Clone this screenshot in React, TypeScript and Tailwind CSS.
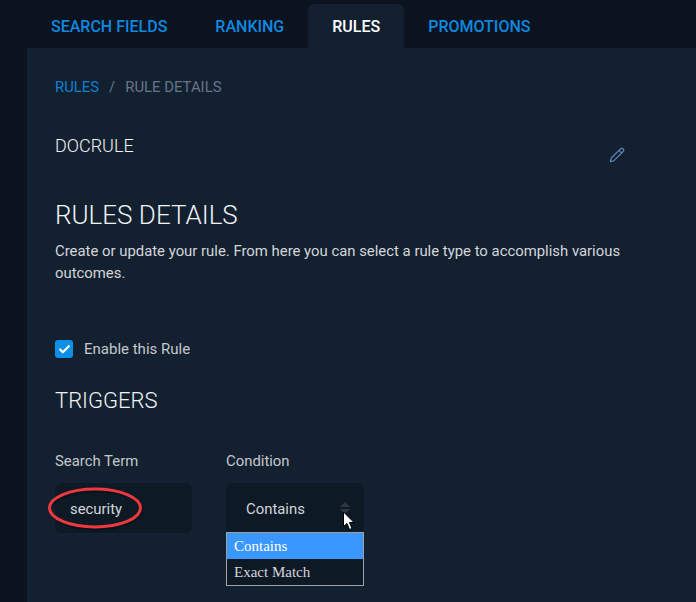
import { Check, Pencil } from 'lucide-react'

const tabs = ['Search Fields', 'Ranking', 'Rules', 'Promotions']

export default function App() {
  return (
    <div className="h-[602px] w-[696px] overflow-hidden bg-[#0a131e] pl-[27px] pt-1 font-['Roboto',sans-serif] text-[#d3d6da]">
      {/* Tabs */}
      <div className="flex h-11">
        {tabs.map((tab) => (
          <div
            key={tab}
            className={
              tab === 'Rules'
                ? 'flex items-center rounded-t-md bg-[#132030] px-6 pt-0.5 text-base font-medium uppercase text-white'
                : 'flex items-center px-6 pt-0.5 text-base font-medium uppercase text-[#0f88e0]'
            }
          >
            {tab}
          </div>
        ))}
      </div>

      {/* Panel */}
      <div className="h-[554px] bg-[#132030] pl-7 pr-[71px] pt-[30px]">
        <div className="flex h-[18px] items-center text-[14.88px] leading-[18px]">
          <span className="text-[#0f7fd0]">RULES</span>
          <span className="mx-[10px] text-[#66758a]">/</span>
          <span className="text-[#66758a]">RULE DETAILS</span>
        </div>

        <div className="mt-[40px] flex h-[27px] items-start justify-between">
          <div className="text-[18px] font-light leading-5 text-[#f0f2f4]">DOCRULE</div>
          <Pencil size={16} strokeWidth={1.75} className="mt-[11px] text-[#5d88b8]" />
        </div>

        <h2 className="mt-[38px] text-[26px] font-light leading-7 text-[#f0f2f4]">RULES DETAILS</h2>
        <p className="mt-[11px] w-[570px] text-[14.88px] leading-[22px] text-[#d3d6da]">
          Create or update your rule. From here you can select a rule type to accomplish various outcomes.
        </p>

        <div className="mt-[55px] flex items-center gap-[11px]">
          <span className="flex size-[18px] items-center justify-center rounded-[3px] bg-[#0d8fe6]">
            <Check size={13} strokeWidth={4} className="text-white" />
          </span>
          <span className="text-[15px] leading-5 text-[#c4c8cd]">Enable this Rule</span>
        </div>

        <h3 className="mt-[28px] text-[22px] font-light leading-7 text-[#f0f2f4]">TRIGGERS</h3>

        <div className="mt-[36px] flex gap-[34px]">
          <div className="w-[137px]">
            <div className="text-[14.88px] leading-5 text-[#c4c8cd]">Search Term</div>
            <div className="relative mt-[12px] flex h-[50px] items-center rounded-md bg-[#0e1926] pl-[15px] pt-0.5 text-[14.88px]">
              security
              <svg className="absolute -left-[7px] top-[4px]" width="98" height="44" viewBox="0 0 98 44" fill="none">
                <ellipse cx="47" cy="21" rx="45.5" ry="19" stroke="#000" strokeOpacity="0.3" strokeWidth="3" transform="translate(1 2)" />
                <ellipse cx="47" cy="21" rx="45.5" ry="19" stroke="#f0393e" strokeWidth="3" />
              </svg>
            </div>
          </div>
          <div className="w-[138px]">
            <div className="text-[14.88px] leading-5 text-[#c4c8cd]">Condition</div>
            <div className="relative mt-[12px] flex h-[49px] items-center rounded-t-md bg-[#0e1926] pl-5 pt-[3px] text-[14.88px]">
              Contains
              <svg className="absolute right-[14px] top-[19px]" width="10" height="12" viewBox="0 0 10 12">
                <path d="M5 0L10 5H0Z" fill="#2c3642" />
                <path d="M5 12L10 7H0Z" fill="#2c3642" />
              </svg>
              <svg className="absolute right-[8px] top-[28px]" width="14" height="20" viewBox="0 0 14 20">
                <path d="M1.5 1V15.5L5 12.5L7.5 18.5L10 17.5L7.5 11.5H12Z" fill="#fff" stroke="#000" strokeWidth="1" />
              </svg>
            </div>
            <div className="border border-[#9ea2a6] bg-[#0e1926] font-['Liberation_Serif',serif] text-[15px]">
              <div className="h-[26px] bg-[#3a97ff] pl-[7px] leading-[26px] text-white">Contains</div>
              <div className="h-[26px] pl-[7px] leading-[26px] text-[#d3d6da]">Exact Match</div>
            </div>
          </div>
        </div>
      </div>
    </div>
  )
}
